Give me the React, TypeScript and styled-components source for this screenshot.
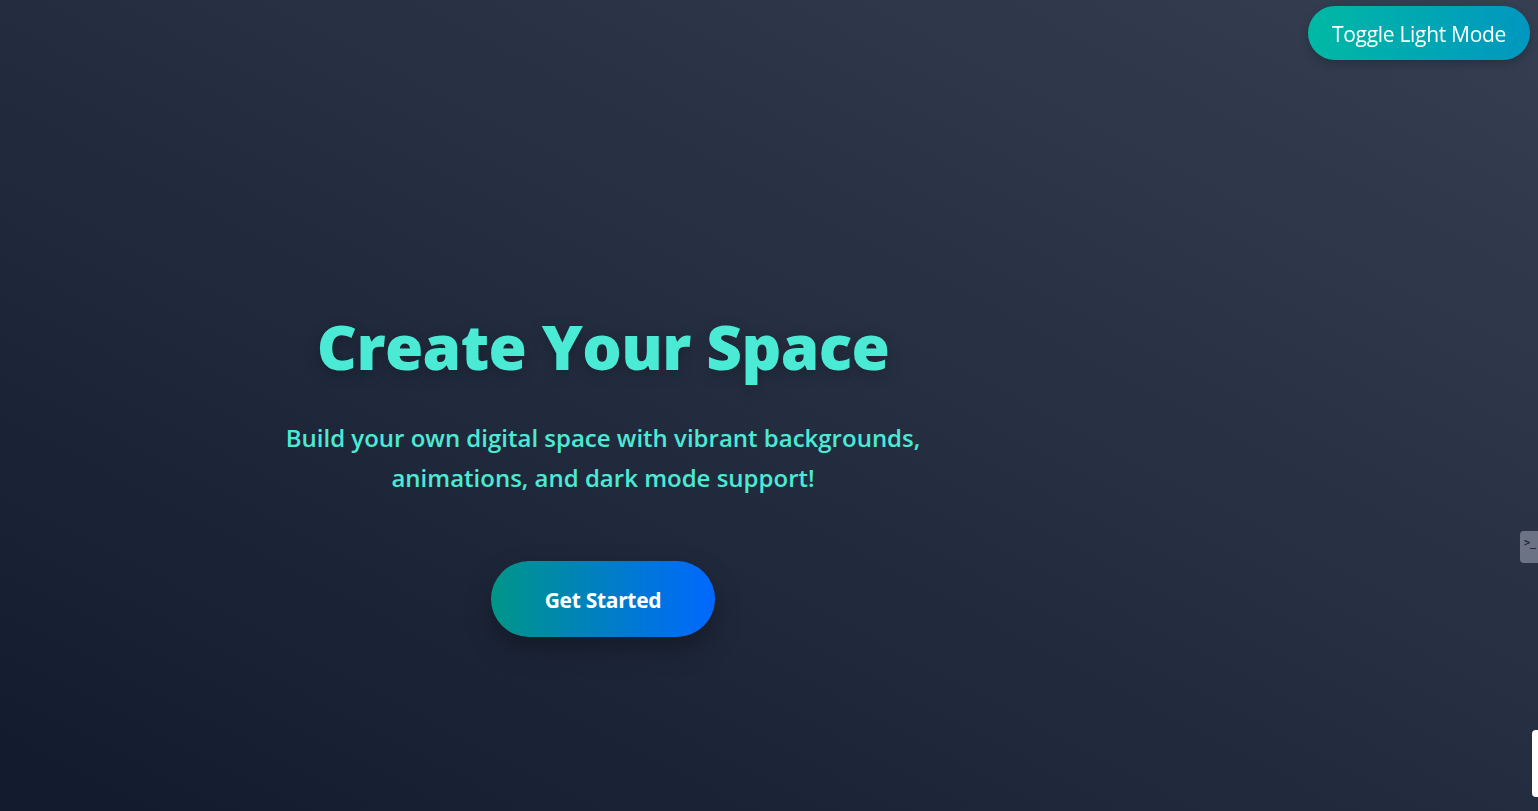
import React from "react";
import styled, { createGlobalStyle } from "styled-components";

const Global = createGlobalStyle`
  html, body { margin: 0; padding: 0; }
  body { font-family: "Open Sans", "Noto Sans", sans-serif; background: #1e293b; }
  * { box-sizing: border-box; }
`;

const Page = styled.main`
  position: relative;
  width: 100%;
  min-height: 100vh;
  overflow: hidden;
  background: linear-gradient(to top right, #121b2e, #353f51);
  display: grid;
  grid-template-columns: 1206px 1fr;
`;

const HeroColumn = styled.section`
  display: flex;
  flex-direction: column;
  align-items: center;
  text-align: center;
  padding-top: 309px;
`;

const Title = styled.h1`
  margin: 0;
  font-size: 62px;
  line-height: 74px;
  font-weight: 800;
  color: #4aead5;
  letter-spacing: -0.6px;
  text-shadow: 0 4px 14px rgba(0, 0, 0, 0.25);
`;

const Subtitle = styled.p`
  margin: 35px 0 0;
  width: 680px;
  font-size: 24px;
  line-height: 40px;
  font-weight: 600;
  color: #4aead5;
`;

const PrimaryButton = styled.button`
  margin-top: 63px;
  width: 224px;
  height: 76px;
  border: none;
  border-radius: 999px;
  background: linear-gradient(to right, #009688, #0068ff);
  color: #ffffff;
  font-family: inherit;
  font-size: 21px;
  font-weight: 700;
  letter-spacing: -0.3px;
  padding-top: 3px;
  box-shadow: 0 12px 28px rgba(0, 0, 0, 0.3);
  cursor: pointer;
`;

const ToggleButton = styled.button`
  position: fixed;
  top: 6px;
  right: 8px;
  width: 222px;
  height: 54px;
  border: none;
  border-radius: 999px;
  background: linear-gradient(to right, #00b9a4, #0097c0);
  color: #ffffff;
  font-family: inherit;
  font-size: 21px;
  font-weight: 400;
  letter-spacing: -0.3px;
  padding-top: 2px;
  box-shadow: 0 4px 10px rgba(0, 0, 0, 0.2);
  cursor: pointer;
`;

const EdgeTab = styled.div`
  position: absolute;
  right: 0;
  top: 531px;
  width: 18px;
  height: 32px;
  border-radius: 4px 0 0 4px;
  background: #6b7385;
  color: #1f2937;
  font-family: "DejaVu Sans Mono", monospace;
  font-size: 10px;
  font-weight: 700;
  line-height: 24px;
  padding-left: 4px;
  overflow: hidden;
  white-space: nowrap;
`;

const EdgeWidget = styled.div`
  position: absolute;
  right: 0;
  top: 730px;
  width: 6px;
  height: 67px;
  border-radius: 4px 0 0 4px;
  background: #ffffff;
`;

export default function App() {
  return (
    <>
      <Global />
      <Page>
        <HeroColumn>
          <Title>Create Your Space</Title>
          <Subtitle>
            Build your own digital space with vibrant backgrounds, animations, and dark mode support!
          </Subtitle>
          <PrimaryButton>Get Started</PrimaryButton>
        </HeroColumn>
        <div />
        <ToggleButton>Toggle Light Mode</ToggleButton>
        <EdgeTab>&gt;_</EdgeTab>
        <EdgeWidget />
      </Page>
    </>
  );
}
